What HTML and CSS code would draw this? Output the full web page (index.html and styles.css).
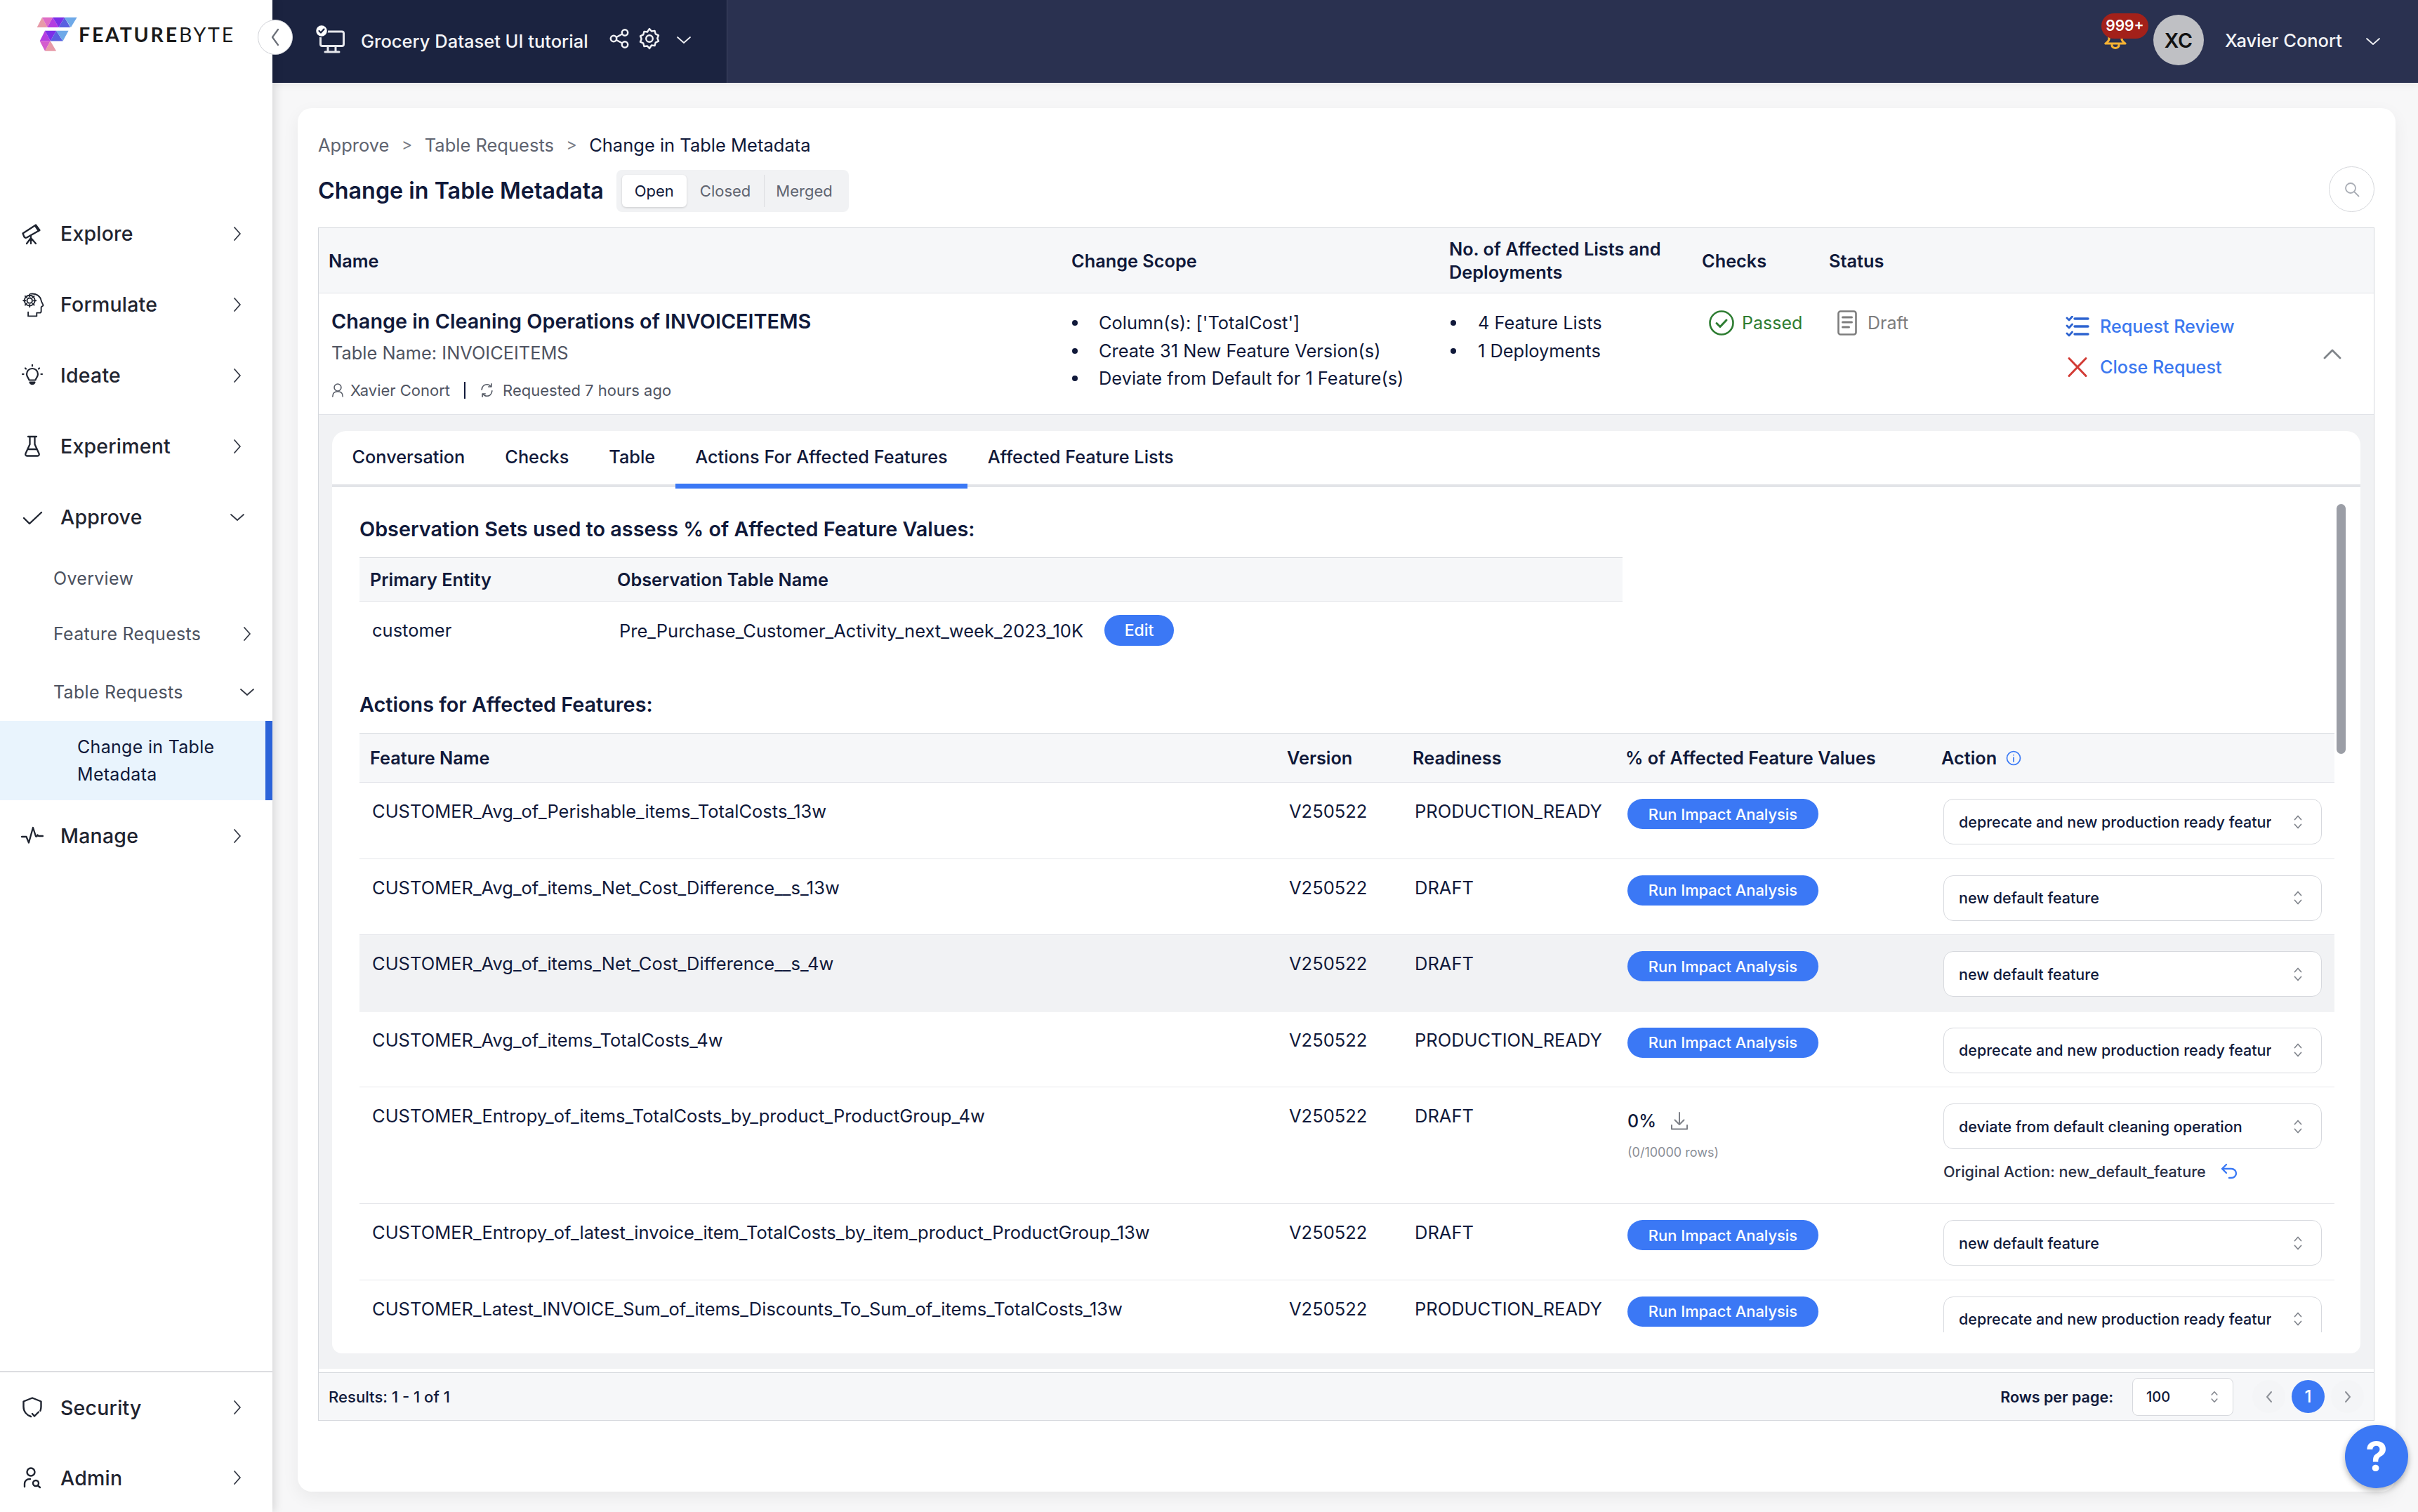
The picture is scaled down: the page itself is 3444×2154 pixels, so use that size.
FILE: index.html
```html
<!DOCTYPE html>
<html lang="en">
<head>
<meta charset="utf-8">
<title>Change in Table Metadata</title>
<link rel="stylesheet" href="styles.css">
</head>
<body>
<svg class="defs" width="0" height="0">
  <defs>
    <symbol id="chev-r" viewBox="0 0 12 24"><path d="M2 3l8 9-8 9" fill="none" stroke="currentColor" stroke-width="1.8" stroke-linecap="round" stroke-linejoin="round"/></symbol>
    <symbol id="chev-d" viewBox="0 0 24 12"><path d="M3 2l9 8 9-8" fill="none" stroke="currentColor" stroke-width="1.8" stroke-linecap="round" stroke-linejoin="round"/></symbol>
    <symbol id="updown" viewBox="0 0 14 22"><path d="M2.500 7.500L7 2.500l4.500 5M2.500 14.500L7 19.500l4.500-5" fill="none" stroke="currentColor" stroke-width="1.700" stroke-linecap="round" stroke-linejoin="round"/></symbol>
  </defs>
</svg>
<div class="app">
  <aside class="sidebar">
    <div class="brand">
      <svg class="logo-mark" viewBox="60 40 185 155">
        <polygon fill="#e79aa8" points="68,88 90,45 112,88"/>
        <polygon fill="#de6cc6" points="90,45 135,45 112,88"/>
        <polygon fill="#b43de0" points="112,88 135,45 160,88"/>
        <polygon fill="#7c2fe8" points="135,45 185,45 160,88"/>
        <polygon fill="#5a60e0" points="160,88 185,45 210,88"/>
        <polygon fill="#6ea9e8" points="185,45 238,45 212,88"/>
        <polygon fill="#b43de0" points="80,146 102,102 125,146"/>
        <polygon fill="#7c2fe8" points="102,102 150,102 125,146"/>
        <polygon fill="#5a60e0" points="125,146 150,102 178,146"/>
        <polygon fill="#6ea9e8" points="150,102 202,102 178,146"/>
        <polygon fill="#d45cce" points="80,146 125,146 102,188"/>
        <polygon fill="#e79aa8" points="102,188 125,146 150,188"/>
      </svg>
      <span class="logo-text"><b>FEATURE</b>BYTE</span>
    </div>
    <nav class="nav">
      <a class="nav-item">
        <svg class="nav-icon" viewBox="0 0 32 32"><g fill="none" stroke="currentColor" stroke-width="2.300" stroke-linejoin="round" stroke-linecap="round"><path d="M2.500 15.500L21 3.500l5.500 7.500L8 21.500a3 3 0 0 1-3.500-1z"/><path d="M20 4.500l5 7.500" /><path d="M14 20v10M14 22l-6 8M14 22l7 8"/></g></svg>
        <span class="nav-label">Explore</span>
        <svg class="chev"><use href="#chev-r"/></svg>
      </a>
      <a class="nav-item">
        <svg class="nav-icon nav-icon-tall" viewBox="0 0 32 34"><g fill="none" stroke="currentColor" stroke-width="1.800" stroke-linejoin="round" stroke-linecap="round"><path d="M13 2.500c7-1 13 3 14 9 .3 2 2.800 5.500 2.800 6.500 0 1-2.800 1.500-2.800 2.500V26c0 1.500-1 2-2 2h-4v4.500H9.500V27"/><circle cx="11.500" cy="11.500" r="3.500"/><path d="M11.500 3v3M11.500 17v3M3 11.500h3M17 11.500h3M5.500 5.500l2 2M15.500 15.500l2 2M5.500 17.500l2-2M15.500 7.500l2-2"/><circle cx="11.500" cy="11.500" r="7"/></g></svg>
        <span class="nav-label">Formulate</span>
        <svg class="chev"><use href="#chev-r"/></svg>
      </a>
      <a class="nav-item">
        <svg class="nav-icon" viewBox="0 0 32 32"><g fill="none" stroke="currentColor" stroke-width="2.200" stroke-linecap="round" stroke-linejoin="round"><path d="M11.500 22.500c0-2.500-3.500-4-3.500-8.500a8 8 0 0 1 16 0c0 4.500-3.500 6-3.500 8.500z"/><path d="M12.500 25.500c1 3.500 6 3.500 7 0z" fill="currentColor"/><path d="M16 1v1.500M2 14h1.500M28.500 14H30M6 5.500l1 1M26 5.500l-1 1"/></g></svg>
        <span class="nav-label">Ideate</span>
        <svg class="chev"><use href="#chev-r"/></svg>
      </a>
      <a class="nav-item">
        <svg class="nav-icon" viewBox="0 0 32 32"><g fill="none" stroke="currentColor" stroke-width="2.300" stroke-linecap="round" stroke-linejoin="round"><path d="M10 2h12M12.500 2v11L6.500 26c-.8 2 .3 3.500 2 3.500h15c1.700 0 2.800-1.500 2-3.500l-6-13V2"/><path d="M10 20h12"/></g></svg>
        <span class="nav-label">Experiment</span>
        <svg class="chev"><use href="#chev-r"/></svg>
      </a>
      <a class="nav-item">
        <svg class="nav-icon" viewBox="0 0 32 32"><path d="M4 17l8 8L29 9" fill="none" stroke="currentColor" stroke-width="2.400" stroke-linecap="round" stroke-linejoin="round"/></svg>
        <span class="nav-label">Approve</span>
        <svg class="chev-down"><use href="#chev-d"/></svg>
      </a>
      <a class="sub-item sub-overview"><span>Overview</span></a>
      <a class="sub-item sub-feature"><span>Feature Requests</span><svg class="chev sub-chev"><use href="#chev-r"/></svg></a>
      <a class="sub-item sub-table"><span>Table Requests</span><svg class="chev-down sub-chev-down"><use href="#chev-d"/></svg></a>
      <a class="sub-active">Change in Table<br>Metadata</a>
      <a class="nav-item">
        <svg class="nav-icon" viewBox="0 0 32 32"><path d="M1 17h6.500l3.500 8.500L17 4l4 12.500h1.500l1-2L25 16h6" fill="none" stroke="currentColor" stroke-width="2.300" stroke-linecap="round" stroke-linejoin="round"/></svg>
        <span class="nav-label">Manage</span>
        <svg class="chev"><use href="#chev-r"/></svg>
      </a>
    </nav>
    <nav class="nav-bottom">
      <a class="nav-item nav-item-low">
        <svg class="nav-icon" viewBox="0 0 32 32"><g fill="none" stroke="currentColor" stroke-width="2.400" stroke-linecap="round" stroke-linejoin="round"><path d="M14 29C8 27 3.500 22 3.500 15V7.500L16 2.500l12.500 5V15c0 2-.4 4-1.100 5.700"/><path d="M16 25l3 3.500 6-6"/></g></svg>
        <span class="nav-label">Security</span>
        <svg class="chev"><use href="#chev-r"/></svg>
      </a>
      <a class="nav-item nav-item-low">
        <svg class="nav-icon" viewBox="0 0 32 32"><g fill="none" stroke="currentColor" stroke-width="2.400" stroke-linecap="round" stroke-linejoin="round"><circle cx="14" cy="8" r="5.500"/><path d="M5 29v-4c0-4 3-7 8-7"/><circle cx="21" cy="24" r="4"/><path d="M24 27.500l3 2.500"/></g></svg>
        <span class="nav-label">Admin</span>
        <svg class="chev"><use href="#chev-r"/></svg>
      </a>
    </nav>
    <button class="collapse"><svg class="collapse-icon" viewBox="0 0 14 28"><path d="M11 3L3 14l8 11" fill="none" stroke="#6b6f78" stroke-width="2.200" stroke-linecap="round" stroke-linejoin="round"/></svg></button>
  </aside>

  <div class="main">
    <header class="topbar">
      <div class="top-left">
        <svg class="monitor" viewBox="0 0 46 42"><g fill="none" stroke="#e6e7ec" stroke-width="3" stroke-linecap="round" stroke-linejoin="round"><path d="M10 10h28c1.500 0 2.500 1 2.500 2.500V28c0 1.500-1 2.500-2.500 2.500H10c-1.500 0-2.500-1-2.500-2.500V16"/><path d="M18 31v7M29 31v7M14 39h20"/></g><circle cx="9" cy="9" r="8.500" fill="#fff" stroke="#1b2340" stroke-width="1.500"/><path d="M5.500 9l2.500 2.500 4.500-5" fill="none" stroke="#1b2340" stroke-width="2.200" stroke-linecap="round" stroke-linejoin="round"/></svg>
        <span class="project">Grocery Dataset UI tutorial</span>
        <svg class="share" viewBox="0 0 28 28"><g fill="none" stroke="#f1f2f5" stroke-width="2.500"><circle cx="6" cy="14" r="4.200"/><circle cx="22" cy="5.500" r="4.200"/><circle cx="22" cy="22.500" r="4.200"/><path d="M9.800 12l8.500-4.500M9.800 16l8.500 4.500"/></g></svg>
        <svg class="gear" viewBox="0 0 30 32"><g fill="none" stroke="#f1f2f5" stroke-width="2.400" stroke-linejoin="round"><path d="M15 2l3 3.500 4.500-.6 1.200 4.400 4.300 2-1.700 4.200 1.700 4.200-4.300 2-1.200 4.400-4.500-.6L15 30l-3-3.500-4.500.6-1.200-4.400-4.300-2 1.700-4.200-1.700-4.200 4.300-2 1.200-4.400 4.500.6z"/><circle cx="15" cy="16" r="4.800"/></g></svg>
        <svg class="top-chev"><use href="#chev-d"/></svg>
      </div>
      <div class="top-right">
        <div class="bell">
          <svg class="bell-icon" viewBox="0 0 32 40"><g fill="none" stroke="#f6b233" stroke-width="3.200" stroke-linecap="round" stroke-linejoin="round"><path d="M7 8v12c0 3-2 5-5 7h28c-3-2-5-4-5-7V8"/><path d="M11 29c0 6 10 6 10 0"/></g></svg>
          <span class="badge">999+</span>
        </div>
        <span class="avatar">XC</span>
        <span class="user">Xavier Conort</span>
        <svg class="user-chev"><use href="#chev-d"/></svg>
      </div>
    </header>

    <main class="card">
      <div class="crumbs"><span>Approve</span><i>&gt;</i><span>Table Requests</span><i>&gt;</i><span class="crumb-now">Change in Table Metadata</span></div>
      <div class="title-row">
        <h1 class="title">Change in Table Metadata</h1>
        <div class="segment"><span class="seg seg-on">Open</span><span class="seg">Closed</span><span class="seg seg-split">Merged</span></div>
        <span class="search"><svg class="search-icon" viewBox="0 0 22 22"><g fill="none" stroke="#a9adb5" stroke-width="1.800" stroke-linecap="round"><circle cx="9" cy="9" r="7"/><path d="M14 14l6.500 6.500"/></g></svg></span>
      </div>

      <section class="requests">
        <div class="req-grid req-head">
          <span>Name</span><span>Change Scope</span><span>No. of Affected Lists and<br>Deployments</span><span>Checks</span><span>Status</span><span></span><span></span>
        </div>
        <div class="req-grid req-row">
          <div class="req-name">
            <h2>Change in Cleaning Operations of INVOICEITEMS</h2>
            <p class="table-name">Table Name: INVOICEITEMS</p>
            <p class="meta">
              <svg class="meta-person" viewBox="0 0 20 24"><g fill="none" stroke="#565b66" stroke-width="1.700" stroke-linecap="round"><circle cx="10" cy="7.500" r="5.500"/><path d="M2 22c0-5 3-8 8-8s8 3 8 8"/></g></svg>
              <span>Xavier Conort</span>
              <i class="meta-sep"></i>
              <svg class="meta-sync" viewBox="0 0 22 24"><g fill="none" stroke="#565b66" stroke-width="1.800" stroke-linecap="round" stroke-linejoin="round"><path d="M3 11C3.500 6 7 3 11 3c2.500 0 4.500 1 6 3"/><path d="M19 13c-.5 5-4 8-8 8-2.500 0-4.500-1-6-3"/><path d="M18 2v4.500h-4.500M4 22v-4.500h4.500"/></g></svg>
              <span>Requested 7 hours ago</span>
            </p>
          </div>
          <ul class="bullets bullets-scope">
            <li>Column(s): ['TotalCost']</li>
            <li>Create 31 New Feature Version(s)</li>
            <li>Deviate from Default for 1 Feature(s)</li>
          </ul>
          <ul class="bullets bullets-lists">
            <li>4 Feature Lists</li>
            <li>1 Deployments</li>
          </ul>
          <div class="passed"><svg class="status-icon" viewBox="0 0 36 36"><g fill="none" stroke="#2e7d32" stroke-width="2.600" stroke-linecap="round" stroke-linejoin="round"><circle cx="18" cy="18" r="16.500"/><path d="M11 18.500l5 5 9-9.500" stroke-width="3"/></g></svg><span>Passed</span></div>
          <div class="draft"><svg class="draft-icon" viewBox="0 0 28 36"><g fill="none" stroke="#7d7d7d" stroke-width="2.600" stroke-linecap="round"><rect x="1.500" y="1.500" width="25" height="33" rx="3"/><path d="M7.500 10h13M7.500 17h13M7.500 24h9" stroke-width="3"/></g></svg><span>Draft</span></div>
          <div class="req-actions">
            <a class="req-link"><svg class="link-icon" viewBox="0 0 34 30"><g fill="none" stroke="#2d63d0" stroke-linecap="round" stroke-linejoin="round"><path d="M13 4h19M13 15h19M13 26h19" stroke-width="3.400"/><path d="M2 3l3 3 4.500-5M2 14l3 3 4.500-5M2 25l3 3 4.500-5" stroke-width="2.800"/></g></svg><span>Request Review</span></a>
            <a class="req-link"><svg class="link-icon" viewBox="0 0 34 30"><path d="M5 2.500l24 25M29 2.500l-24 25" fill="none" stroke="#d23b35" stroke-width="3" stroke-linecap="round"/></svg><span>Close Request</span></a>
          </div>
          <div class="req-collapse"><svg class="up-chev" viewBox="0 0 26 15"><path d="M2 13L13 2l11 11" fill="none" stroke="#7f8489" stroke-width="2.800" stroke-linecap="round" stroke-linejoin="round"/></svg></div>
        </div>

        <div class="detail">
          <div class="detail-card">
            <div class="tabs">
              <a class="tab">Conversation</a>
              <a class="tab">Checks</a>
              <a class="tab">Table</a>
              <a class="tab tab-on">Actions For Affected Features</a>
              <a class="tab">Affected Feature Lists</a>
            </div>
            <div class="tab-body">
              <h3 class="section-title">Observation Sets used to assess % of Affected Feature Values:</h3>
              <div class="obs-table">
                <div class="obs-grid obs-head"><span>Primary Entity</span><span>Observation Table Name</span></div>
                <div class="obs-grid obs-row"><span class="obs-entity">customer</span><span class="obs-name">Pre_Purchase_Customer_Activity_next_week_2023_10K<a class="edit-btn">Edit</a></span></div>
              </div>
              <h3 class="section-title section-second">Actions for Affected Features:</h3>
              <div class="ft-grid ft-head">
                <span>Feature Name</span><span>Version</span><span>Readiness</span><span>% of Affected Feature Values</span>
                <span class="action-head">Action<svg class="info" viewBox="0 0 22 22"><g fill="none" stroke="#3b7af5" stroke-width="1.700" stroke-linecap="round"><circle cx="11" cy="11" r="9.500"/><path d="M11 10v6M11 6.500v.2"/></g></svg></span>
              </div>

              <div class="ft-grid ft-row">
                <span>CUSTOMER_Avg_of_Perishable_items_TotalCosts_13w</span><span>V250522</span><span>PRODUCTION_READY</span>
                <span><a class="run-btn">Run Impact Analysis</a></span>
                <div class="select"><span class="select-text">deprecate and new production ready feature</span><svg class="updown"><use href="#updown"/></svg></div>
              </div>
              <div class="ft-grid ft-row">
                <span>CUSTOMER_Avg_of_items_Net_Cost_Difference__s_13w</span><span>V250522</span><span>DRAFT</span>
                <span><a class="run-btn">Run Impact Analysis</a></span>
                <div class="select"><span class="select-text">new default feature</span><svg class="updown"><use href="#updown"/></svg></div>
              </div>
              <div class="ft-grid ft-row ft-row-hover">
                <span>CUSTOMER_Avg_of_items_Net_Cost_Difference__s_4w</span><span>V250522</span><span>DRAFT</span>
                <span><a class="run-btn">Run Impact Analysis</a></span>
                <div class="select"><span class="select-text">new default feature</span><svg class="updown"><use href="#updown"/></svg></div>
              </div>
              <div class="ft-grid ft-row">
                <span>CUSTOMER_Avg_of_items_TotalCosts_4w</span><span>V250522</span><span>PRODUCTION_READY</span>
                <span><a class="run-btn">Run Impact Analysis</a></span>
                <div class="select"><span class="select-text">deprecate and new production ready feature</span><svg class="updown"><use href="#updown"/></svg></div>
              </div>
              <div class="ft-grid ft-row">
                <span>CUSTOMER_Entropy_of_items_TotalCosts_by_product_ProductGroup_4w</span><span>V250522</span><span>DRAFT</span>
                <div>
                  <div class="pct">0%<svg class="download" viewBox="0 0 26 28"><g fill="none" stroke="#7d8087" stroke-width="2" stroke-linecap="round" stroke-linejoin="round"><path d="M13 2v17M6.500 12.500L13 19l6.500-6.500M2 20v5.500h22V20"/></g></svg></div>
                  <div class="pct-rows">(0/10000 rows)</div>
                </div>
                <div>
                  <div class="select"><span class="select-text">deviate from default cleaning operation</span><svg class="updown"><use href="#updown"/></svg></div>
                  <div class="original">Original Action: new_default_feature<svg class="undo" viewBox="0 0 26 24"><path d="M9 2L3 8l6 6M3 8h13c4 0 7 3 7 6.500S20 21 16 21h-3" fill="none" stroke="#3b7af5" stroke-width="2.400" stroke-linecap="round" stroke-linejoin="round"/></svg></div>
                </div>
              </div>
              <div class="ft-grid ft-row">
                <span>CUSTOMER_Entropy_of_latest_invoice_item_TotalCosts_by_item_product_ProductGroup_13w</span><span>V250522</span><span>DRAFT</span>
                <span><a class="run-btn">Run Impact Analysis</a></span>
                <div class="select"><span class="select-text">new default feature</span><svg class="updown"><use href="#updown"/></svg></div>
              </div>
              <div class="ft-grid ft-row">
                <span>CUSTOMER_Latest_INVOICE_Sum_of_items_Discounts_To_Sum_of_items_TotalCosts_13w</span><span>V250522</span><span>PRODUCTION_READY</span>
                <span><a class="run-btn">Run Impact Analysis</a></span>
                <div class="select"><span class="select-text">deprecate and new production ready feature</span><svg class="updown"><use href="#updown"/></svg></div>
              </div>
              <span class="scrollbar"></span>
            </div>
          </div>
        </div>

        <footer class="pager">
          <span class="results">Results: 1 - 1 of 1</span>
          <div class="pager-right">
            <span class="rows-label">Rows per page:</span>
            <div class="rows-select"><span>100</span><svg class="updown updown-small"><use href="#updown"/></svg></div>
            <span class="page-btn page-muted"><svg class="page-chev" viewBox="0 0 10 18"><path d="M8 2L2 9l6 7" fill="none" stroke="#8d9097" stroke-width="2" stroke-linecap="round" stroke-linejoin="round"/></svg></span>
            <span class="page-btn page-on">1</span>
            <span class="page-btn page-muted"><svg class="page-chev" viewBox="0 0 10 18"><path d="M2 2l6 7-6 7" fill="none" stroke="#8d9097" stroke-width="2" stroke-linecap="round" stroke-linejoin="round"/></svg></span>
          </div>
        </footer>
      </section>
    </main>
  </div>
  <button class="help">?</button>
</div>
</body>
</html>
```
FILE: styles.css
```css
* { box-sizing: border-box; }
html, body { margin: 0; padding: 0; height: 100%; }
body { font-family: Inter, "Liberation Sans", sans-serif; color: #10193a; background: #f7f7f8; overflow: hidden; }
.defs { position: absolute; }
h1, h2, h3, p, ul { margin: 0; padding: 0; }
a { color: inherit; text-decoration: none; }
button { border: 0; padding: 0; font-family: inherit; }

.app { position: relative; display: flex; width: 3444px; height: 2154px; overflow: hidden; }

/* sidebar */
.sidebar { position: relative; z-index: 3; flex: 0 0 388px; display: flex; flex-direction: column; background: #fff; box-shadow: 4px 0 12px rgba(0,0,0,.12); color: #1f2430; }
.brand { display: flex; height: 282px; align-items: flex-start; padding: 23px 0 0 50px; }
.logo-mark { width: 62px; height: 52px; flex: none; }
.logo-text { font-family: Lato, sans-serif; font-size: 28.5px; line-height: 52px; letter-spacing: 2.8px; color: #1a1a1a; white-space: nowrap; }
.logo-text b { font-weight: 700; }
.nav { flex: 1; }
.nav-item { display: flex; align-items: center; height: 101px; padding-left: 30px; position: relative; }
.nav-item-low { height: 100px; }
.nav-icon { width: 32px; height: 32px; flex: none; }
.nav-icon-tall { width: 34px; height: 36px; margin-right: -2px; }
.nav-label { margin-left: 24px; font-size: 28.5px; font-weight: 500; letter-spacing: .2px; }
.chev { position: absolute; left: 332px; top: 50%; width: 12px; height: 24px; margin-top: -12px; color: #333844; }
.chev-down { position: absolute; left: 326px; top: 50%; width: 24px; height: 12px; margin-top: -6px; color: #333844; }
.sub-item { display: flex; align-items: center; position: relative; padding-left: 76px; font-size: 25px; font-weight: 400; letter-spacing: .3px; color: #4c5260; }
.sub-overview { height: 74px; }
.sub-feature { height: 84px; }
.sub-table { height: 82px; }
.sub-chev { left: 346px; }
.sub-chev-down { left: 340px; }
.sub-active { display: block; height: 113px; padding: 18px 0 0 110px; font-size: 25px; line-height: 39px; letter-spacing: .3px; color: #10193a; background: #e9f4fd; border-right: 10px solid #2c63d9; }
.nav-bottom { border-top: 2px solid #dcdde0; height: 201px; flex: none; }
.collapse { position: absolute; left: 367px; top: 28px; width: 50px; height: 50px; border-radius: 50%; background: #fff; border: 1.500px solid #cfd1d6; display: flex; align-items: center; justify-content: center; z-index: 5; }
.collapse-icon { width: 14px; height: 28px; }

/* top bar */
.main { flex: 1; min-width: 0; display: flex; flex-direction: column; }
.topbar { flex: 0 0 118px; display: flex; background: #2a3150; box-shadow: 0 3px 10px rgba(0,0,0,.06); }
.top-left { flex: 0 0 648px; display: flex; align-items: center; background: #1b2340; border-right: 1.500px solid #3f4662; padding-left: 61px; }
.monitor { width: 46px; height: 42px; flex: none; margin-top: -7px; }
.project { margin-left: 19px; font-size: 25.5px; font-weight: 500; color: #f3f4f7; margin-top: -2px; }
.share { width: 28px; height: 28px; margin-left: 30px; margin-top: -8px; }
.gear { width: 30px; height: 32px; margin-left: 14px; margin-top: -8px; }
.top-chev { width: 24px; height: 12px; margin-left: 22px; color: #f1f2f5; margin-top: -4px; }
.top-right { flex: 1; display: flex; align-items: center; justify-content: flex-end; padding-right: 52px; }
.bell { position: relative; width: 32px; height: 40px; margin-right: 38px; margin-top: -8px; }
.bell-icon { display: block; width: 32px; height: 40px; }
.badge { position: absolute; left: -4px; top: -16px; width: 67px; height: 36px; border-radius: 18px; background: #a3211a; color: #fff; font-size: 21px; font-weight: 600; line-height: 36px; text-align: center; }
.avatar { width: 72px; height: 72px; border-radius: 50%; background: #bfc0c4; color: #111; font-size: 28.5px; font-weight: 600; display: flex; align-items: center; justify-content: center; margin-top: -4px; }
.user { margin-left: 30px; font-size: 25.5px; font-weight: 500; color: #f3f4f7; margin-top: -3px; }
.user-chev { width: 24px; height: 12px; margin-left: 32px; color: #f1f2f5; }

/* card */
.card { flex: 1; margin: 36px 32px 29px 36px; padding: 32px 30px 0 29px; background: #fff; border-radius: 20px; box-shadow: 0 8px 24px rgba(0,0,0,.06); min-height: 0; display: flex; flex-direction: column; }
.crumbs { display: flex; align-items: center; height: 40px; font-size: 25.5px; color: #5f6470; }
.crumbs i { font-style: normal; margin: 0 17.500px; font-size: 23px; color: #777b85; }
.crumb-now { color: #10193a; }
.title-row { display: flex; align-items: flex-end; height: 65px; margin-top: 11px; }
.title { font-size: 32.3px; font-weight: 600; line-height: 60px; }
.segment { display: flex; align-items: center; height: 60px; margin-left: 18px; padding: 0 8px; background: #f1f2f4; border-radius: 8px; font-size: 22px; color: #5f6470; }
.seg { padding: 0 19px; line-height: 46px; }
.seg-on { background: #fff; color: #10193a; border-radius: 6px; box-shadow: 0 1px 3px rgba(0,0,0,.16); width: 92px; text-align: center; padding: 0; }
.seg-split { border-left: 1.500px solid #dcdde0; line-height: 46px; padding: 0 15px 0 16px; }
.search { margin-left: auto; width: 65px; height: 65px; border-radius: 50%; border: 1.500px solid #d6d8dc; display: flex; align-items: center; justify-content: center; }
.search-icon { width: 22px; height: 22px; }

/* request table */
.requests { margin-top: 22px; display: flex; flex-direction: column; border-left: 1.500px solid #d5d8dd; border-right: 1.500px solid #d5d8dd; flex: 0 0 1700px; }
.req-grid { display: grid; grid-template-columns: 1058px 538px 360px 181px 336px 364px 92px; }
.req-head { height: 94px; align-items: center; background: #f6f7f9; border-top: 1.500px solid #d5d8dd; border-bottom: 1.500px solid #e1e3e8; font-size: 25.3px; font-weight: 600; line-height: 33px; }
.req-head span { padding-left: 14px; }
.req-row { height: 173px; border-bottom: 1.500px solid #e1e3e8; background: #fff; }
.req-name { padding: 20px 0 0 18px; }
.req-name h2 { font-size: 28.8px; font-weight: 600; line-height: 40px; }
.table-name { font-size: 25.4px; line-height: 36px; margin-top: 7px; color: #4f5462; }
.meta { display: flex; align-items: center; font-size: 22px; line-height: 30px; margin-top: 20px; color: #4f5462; }
.meta-person { width: 18px; height: 22px; margin-right: 9px; }
.meta-sep { width: 2px; height: 24px; background: #10193a; margin: 0 20px; }
.meta-sync { width: 21px; height: 22px; margin-right: 12px; }
.bullets { list-style: none; padding-top: 22px; font-size: 25.4px; line-height: 39.500px; }
.bullets li { position: relative; }
.bullets li::before { content: ""; position: absolute; width: 8px; height: 8px; border-radius: 50%; background: #10193a; top: 16px; }
.bullets-scope { padding-left: 53px; }
.bullets-scope li::before { left: -38px; }
.bullets-lists { padding-left: 55px; }
.bullets-lists li::before { left: -39px; }
.passed, .draft { display: flex; align-items: flex-start; padding-top: 24px; font-size: 25px; line-height: 36px; }
.passed { padding-left: 24px; color: #2e7d32; }
.status-icon { width: 36px; height: 36px; margin-right: 11px; flex: none; }
.draft { padding-left: 26px; color: #7d7d7d; }
.draft-icon { width: 28px; height: 36px; margin-right: 15px; flex: none; }
.req-actions { padding: 18px 0 0 15px; }
.req-link { display: flex; align-items: center; height: 58px; color: #3b78ef; font-size: 25.2px; font-weight: 500; }
.link-icon { width: 34px; height: 30px; margin-right: 15px; flex: none; }
.req-collapse { padding: 79px 0 0 18px; }
.up-chev { display: block; width: 26px; height: 15px; }

.detail { flex: 0 0 1359px; padding: 23px 19px 22px; background: #f1f2f4; }
.detail-card { position: relative; height: 1314px; background: #fff; border-radius: 20px 20px 14px 14px; padding-bottom: 30px; display: flex; flex-direction: column; }
.tabs { flex: 0 0 80px; min-height: 0; height: 80px; display: flex; border-bottom: 4px solid #e2e4e8; }
.tab { display: flex; align-items: center; height: 82px; flex: none; padding: 0 28.5px 2px; font-size: 25.3px; font-weight: 500; border-bottom: 7px solid transparent; }
.tab-on { border-bottom-color: #3b78f5; }
.tab-body { position: relative; flex: 1; min-height: 0; overflow: hidden; padding: 41px 37px 0 39px; }
.section-title { font-size: 28.8px; font-weight: 600; line-height: 38px; }
.section-second { margin-top: 44px; }
.obs-table { width: 1799px; margin-top: 21px; }
.obs-grid { display: grid; grid-template-columns: 352px 1fr; }
.obs-head { height: 63px; align-items: center; background: #f6f7f9; border-top: 1.500px solid #d5d8dd; border-bottom: 1.500px solid #e1e3e8; font-size: 25.3px; font-weight: 600; }
.obs-head span { padding-left: 15px; }
.obs-row { height: 84px; font-size: 25.5px; }
.obs-entity { padding: 23px 0 0 18px; line-height: 36px; }
.obs-name { padding: 0 0 0 18px; display: flex; align-items: center; margin-top: -2px; }
.edit-btn { display: inline-flex; align-items: center; justify-content: center; width: 99px; height: 44px; margin-left: 30px; border-radius: 22px; background: #3b78f5; color: #fff; font-size: 23px; font-weight: 500; }
.ft-grid { display: grid; grid-template-columns: 1306px 179px 303px 450px 577px; }
.ft-head { margin-top: 21px; height: 71px; align-items: center; background: #f6f7f9; border-top: 1.500px solid #d5d8dd; border-bottom: 1.500px solid #e1e3e8; font-size: 25.3px; font-weight: 600; }
.ft-head > span { padding-left: 15px; }
.action-head { display: flex; align-items: center; }
.info { width: 22px; height: 22px; margin-left: 13px; }
.ft-row { padding: 23px 0 19.500px; border-bottom: 1.500px solid #e6e7eb; font-size: 25.5px; line-height: 36px; }
.ft-row > * { padding-left: 18px; }
.ft-row-hover { background: #f1f2f4; }
.run-btn { display: inline-flex; align-items: center; justify-content: center; width: 272px; height: 43px; border-radius: 22px; background: #3b78f5; color: #fff; font-size: 21.9px; font-weight: 500; }
.select { display: flex; align-items: center; width: 539px; height: 65px; padding: 0 20px 0 21px; border: 1.500px solid #d7d9de; border-radius: 14px; background: #fff; }
.ft-row > .select { margin-left: 18px; padding-left: 21px; }
.select-text { width: 445px; overflow: hidden; white-space: nowrap; font-size: 21.5px; font-weight: 500; line-height: 30px; }
.updown { width: 14px; height: 22px; margin-left: auto; margin-right: 6px; color: #80848c; flex: none; }
.pct { display: flex; align-items: center; font-size: 25px; font-weight: 500; line-height: 32px; margin-top: 9px; }
.download { width: 26px; height: 28px; margin-left: 20px; }
.pct-rows { margin-top: 17px; font-size: 18px; line-height: 24px; color: #8b8e96; }
.original { display: flex; align-items: center; margin: 15px 0 8.500px; font-size: 21.6px; line-height: 34px; font-weight: 500; color: #2a3046; white-space: nowrap; }
.undo { width: 26px; height: 24px; margin-left: 20px; }
.scrollbar { position: absolute; right: 21px; top: 24px; width: 13px; height: 356px; border-radius: 7px; background: #9b9ea6; }

/* pager */
.pager { flex: none; height: 69px; margin-top: 5px; display: flex; align-items: center; justify-content: space-between; padding: 0 14px; background: #f6f7f9; border-top: 1.500px solid #d5d8dd; border-bottom: 1.500px solid #d5d8dd; font-size: 22.1px; font-weight: 500; }
.pager-right { display: flex; align-items: center; }
.rows-label { font-size: 21.5px; font-weight: 600; }
.rows-select { display: flex; align-items: center; width: 144px; height: 54px; margin-left: 27px; padding: 0 0 0 19px; border: 1.500px solid #d7d9de; border-radius: 8px; background: #fff; font-size: 20px; }
.updown-small { width: 12px; height: 20px; margin-right: 20px; }
.page-btn { width: 47px; height: 47px; border-radius: 50%; display: flex; align-items: center; justify-content: center; }
.page-muted { background: #f4f5f7; }
.rows-select + .page-btn { margin-left: 27px; }
.page-on { margin: 0 9px; background: #3b78f5; color: #fff; font-size: 24px; }
.page-chev { width: 10px; height: 18px; }

.help { position: absolute; left: 3340px; top: 2030px; width: 90px; height: 90px; border-radius: 50%; background: #3b78f5; color: #fff; font-size: 56px; font-weight: 700; line-height: 90px; box-shadow: 0 4px 8px rgba(0,0,0,.3); z-index: 6; }
```
